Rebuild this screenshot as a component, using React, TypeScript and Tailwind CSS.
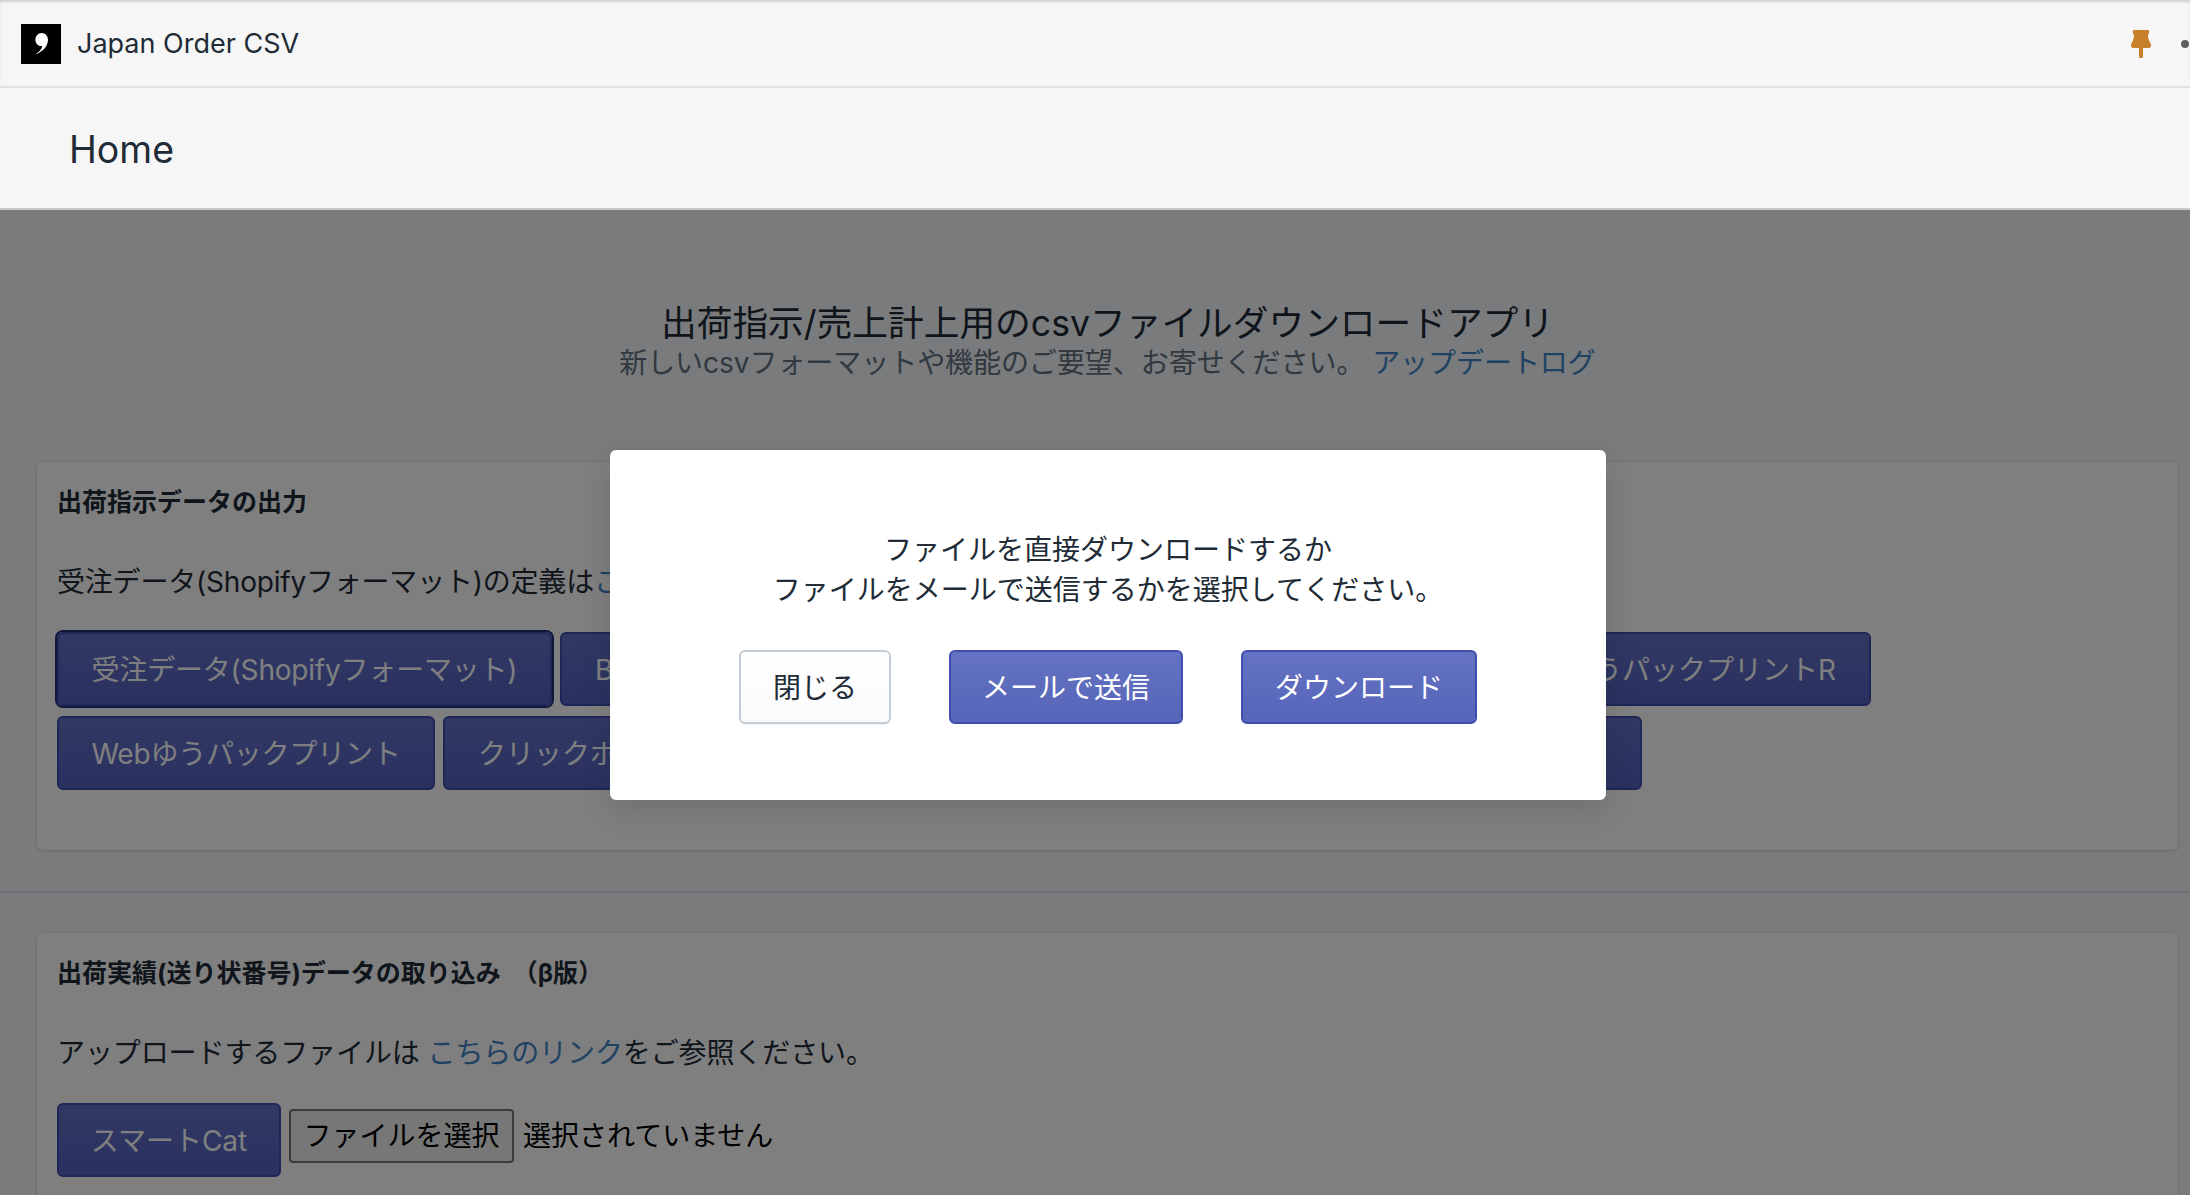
const font = "font-['Inter','Noto_Sans_CJK_JP',sans-serif]";

const PrimaryButton = ({ label, className = "", modal = false }: { label: string; className?: string; modal?: boolean }) => (
  <button
    className={`h-[74px] shrink-0 whitespace-nowrap rounded-[6px] border-2 bg-gradient-to-b pt-[2px] text-[28px] leading-[40px] text-white ${
      modal ? "border-[#3f4eae] from-[#6472c1] to-[#5765ba]" : "border-[#3f4eae] from-[#6371c7] to-[#5563c1]"
    } ${className}`}
  >
    {label}
  </button>
);

const Card = ({ title, children }: { title: string; children: React.ReactNode }) => (
  <section className="rounded-[6px] bg-white px-[20px] pt-[24px] shadow-[0_0_0_1px_rgba(63,63,68,0.05),0_1px_3px_0_rgba(63,63,68,0.15)]">
    <h2 className="whitespace-pre-wrap pt-px text-[25px] leading-[31px] font-bold text-[#212b36]">{title}</h2>
    {children}
  </section>
);

const PinIcon = () => (
  <svg width="20" height="28" viewBox="0 0 20 28" fill="#c77f2a">
    <path d="M3.500 0h13c1.500 0 2.200 1.300 1.700 2.600-.7 1.600-1.200 2.700-1.200 3.600 0 2.600 1.600 5 2.700 7.600.7 1.800.2 4.200-1.700 4.200H12v8.500c0 .9-.5 1.500-1.200 1.500H9.200c-.7 0-1.200-.6-1.200-1.500V18H2c-1.900 0-2.400-2.400-1.700-4.200C1.400 11.200 3 8.800 3 6.200c0-.9-.5-2-1.200-3.600C1.300 1.300 2 0 3.500 0z" />
  </svg>
);

const LogoIcon = () => (
  <svg width="40" height="40" viewBox="0 0 40 40">
    <rect width="40" height="40" fill="#000" />
    <path d="M20.500 9c3.800 0 6.500 2.900 6.500 6.800 0 6.200-5 12.200-12.500 14.400 4-2.400 6.200-5 6.800-8.200-.3.100-.6.100-.9.100-3.500 0-6-2.900-6-6.400 0-3.700 2.700-6.700 6.100-6.700z" fill="#fff" />
  </svg>
);

export default function App() {
  return (
    <div lang="ja" className={`relative h-[1195px] w-[2190px] overflow-hidden bg-[#f4f6f8] text-[#212b36] ${font}`}>
      <header className="flex h-[88px] items-center border-b-2 border-[#e1e1e1] bg-[#f6f6f6] pl-[21px] pt-[2px] shadow-[inset_0_3px_3px_-1px_rgba(0,0,0,0.16)]">
        <LogoIcon />
        <span className="ml-[16px] text-[27px] leading-[36px]">Japan Order CSV</span>
        <div className="ml-auto flex items-center gap-[30px] pr-px">
          <PinIcon />
          <span className="h-[8px] w-[8px] rounded-full bg-[#5c5f62]" />
        </div>
      </header>
      <div className="flex h-[122px] items-center border-b-2 border-[#c9c9c9] bg-[#f6f6f6] pl-[69px]">
        <h1 className="pt-[4px] text-[37.500px] leading-[48px]">Home</h1>
      </div>

      <main className="pl-[37px] pr-[12px] pt-[93px]">
        <div className="text-center">
          <p className="text-[35.700px] leading-[40px]">出荷指示/売上計上用のcsvファイルダウンロードアプリ</p>
          <p className="text-[28px] leading-[40px] tracking-[-0.05px] text-[#637381]">
            新しいcsvフォーマットや機能のご要望、お寄せください。{" "}
            <a className="text-[#3e85c7]">アップデートログ</a>
          </p>
        </div>

        <div className="mt-[79px]">
          <Card title="出荷指示データの出力">
            <p className="mt-[44px] text-[28px] leading-[40px] tracking-[-0.2px]">
              受注データ(Shopifyフォーマット)の定義は<a className="text-[#3e85c7]">こちらのリンク</a>
            </p>
            <div className="mt-[30px] flex flex-wrap gap-x-2 gap-y-[10px] pb-[60px]">
              <PrimaryButton label="受注データ(Shopifyフォーマット)" className="w-[495px] tracking-[-0.2px] shadow-[0_0_0_2px_#202e78]" />
              <PrimaryButton label="B2クラウド" className="w-[400px] pl-[33px] text-left" />
              <PrimaryButton label="e飛伝II" className="w-[555px]" />
              <PrimaryButton label="ゆうパックプリントR" className="w-[340px]" />
              <PrimaryButton label="Webゆうパックプリント" className="w-[378px] tracking-[-0.2px]" />
              <PrimaryButton label="クリックポスト" className="w-[264px] pl-[33px] text-left" />
              <PrimaryButton label="スマートレター" className="w-[927px]" />
            </div>
          </Card>
        </div>

        <div className="mx-[-37px] mr-[-12px] mt-[41px] border-t-2 border-[#dfe3e8]" />

        <div className="mt-[40px]">
          <Card title="出荷実績(送り状番号)データの取り込み  （β版）">
            <p className="mt-[44px] text-[28px] leading-[40px] tracking-[-0.1px]">
              アップロードするファイルは <a className="text-[#3e85c7]">こちらのリンク</a>をご参照ください。
            </p>
            <div className="mt-[30px] flex items-start pb-[40px]">
              <PrimaryButton label="スマートCat" className="w-[224px]" />
              <button className="ml-2 mt-[6px] h-[54px] w-[225px] rounded-[4px] border-2 border-[#767676] bg-[#efefef] text-[28px] leading-[40px] text-black">
                ファイルを選択
              </button>
              <span className="ml-[9px] mt-[13px] text-[28px] leading-[40px] text-black">選択されていません</span>
            </div>
          </Card>
        </div>
      </main>

      {/* backdrop only covers the page below the app header */}
      <div className="absolute inset-x-0 bottom-0 top-[210px] bg-black/50" />

      <div className="absolute left-[610px] top-[450px] flex h-[350px] w-[996px] flex-col items-center rounded-[6px] bg-white shadow-[0_10px_30px_rgba(0,0,0,0.12)]">
        <p className="mt-[80px] text-center text-[28px] leading-[40px] text-[#212b36]">
          ファイルを直接ダウンロードするか
          <br />
          ファイルをメールで送信するかを選択してください。
        </p>
        <div className="mt-[40px] flex gap-[58px]">
          <button className="h-[74px] w-[152px] rounded-[6px] border-2 border-[#c4cdd5] bg-gradient-to-b from-white to-[#f9fafb] pt-[2px] text-[28px] leading-[40px] text-[#212b36] shadow-[0_1px_0_0_rgba(22,29,37,0.05)]">
            閉じる
          </button>
          <PrimaryButton modal label="メールで送信" className="w-[234px]" />
          <PrimaryButton modal label="ダウンロード" className="w-[236px]" />
        </div>
      </div>
    </div>
  );
}
